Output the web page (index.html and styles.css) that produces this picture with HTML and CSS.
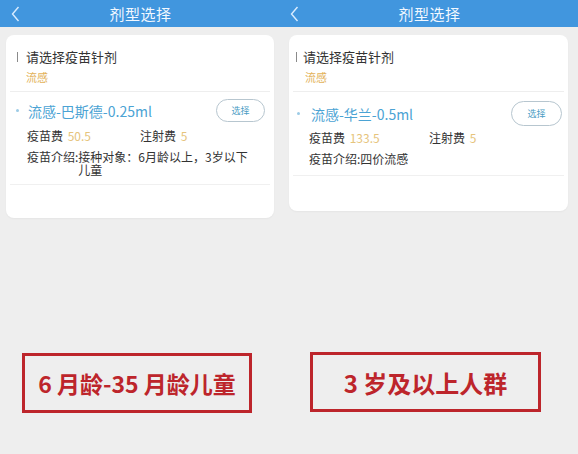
FILE: index.html
```html
<!DOCTYPE html>
<html lang="zh-CN">
<head>
    <meta charset="UTF-8">
    <meta name="viewport" content="width=device-width, initial-scale=1.0">
    <title>剂型选择</title>
    <link rel="stylesheet" href="styles.css">
</head>
<body>
    <div class="screens">
        <!-- 左侧：6月龄-35月龄 -->
        <div class="phone phone-left">
            <div class="nav">
                <span class="nav-back">
                    <svg width="9" height="16" viewBox="0 0 9 16"><path d="M7.5 1 L1.5 8 L7.5 15" fill="none" stroke="#d9ecff" stroke-width="1.4"/></svg>
                </span>
                <span class="nav-title">剂型选择</span>
                <span></span>
            </div>

            <div class="card">
                <div class="card-head">
                    <div class="card-title">请选择疫苗针剂</div>
                    <div class="card-sub">流感</div>
                </div>
                <div class="dose">
                    <div class="dose-top">
                        <span class="dose-name">流感-巴斯德-0.25ml</span>
                        <button class="pick-btn">选择</button>
                    </div>
                    <div class="fee-row">
                        <span class="fee">疫苗费 <em>50.5</em></span>
                        <span class="fee">注射费 <em>5</em></span>
                    </div>
                    <div class="intro">
                        <span class="intro-label">疫苗介绍:</span>
                        <span class="intro-text">接种对象：6月龄以上，3岁以下儿童</span>
                    </div>
                </div>
            </div>

            <div class="tag">6 月龄-35 月龄儿童</div>
        </div>

        <!-- 右侧：3岁及以上 -->
        <div class="phone phone-right">
            <div class="nav">
                <span class="nav-back">
                    <svg width="9" height="16" viewBox="0 0 9 16"><path d="M7.5 1 L1.5 8 L7.5 15" fill="none" stroke="#d9ecff" stroke-width="1.4"/></svg>
                </span>
                <span class="nav-title">剂型选择</span>
                <span></span>
            </div>

            <div class="card">
                <div class="card-head">
                    <div class="card-title">请选择疫苗针剂</div>
                    <div class="card-sub">流感</div>
                </div>
                <div class="dose">
                    <div class="dose-top">
                        <span class="dose-name">流感-华兰-0.5ml</span>
                        <button class="pick-btn">选择</button>
                    </div>
                    <div class="fee-row">
                        <span class="fee">疫苗费 <em>133.5</em></span>
                        <span class="fee">注射费 <em>5</em></span>
                    </div>
                    <div class="intro">
                        <span class="intro-label">疫苗介绍:</span>
                        <span class="intro-text">四价流感</span>
                    </div>
                </div>
            </div>

            <div class="tag">3 岁及以上人群</div>
        </div>
    </div>
</body>
</html>
```

FILE: styles.css
```css
:root {
    --nav: #4196de;
    --bg: #eeeeee;
    --card-bg: #ffffff;
    --text: #333333;
    --blue: #4ba3d4;
    --orange: #e3b25a;
    --red: #bd252b;
}

body {
    margin: 0;
    background: var(--bg);
    font-family: "Noto Sans CJK SC", "Noto Sans", sans-serif;
    color: var(--text);
}

.screens {
    display: flex;
    width: 578px;
    height: 454px;
    overflow: hidden;
}

.phone {
    background: var(--bg);
}

.phone-left {
    width: 281px;
}

.phone-right {
    width: 297px;
}

.nav {
    height: 27px;
    background: var(--nav);
    display: grid;
    grid-template-columns: 1fr auto 1fr;
    align-items: center;
}

.nav-back {
    display: flex;
    align-items: center;
    padding-left: 11px;
}

.phone-right .nav-back {
    padding-left: 9px;
}

.nav-title {
    color: #f2f8ff;
    font-size: 15px;
    line-height: 27px;
    letter-spacing: 0.5px;
}

.card {
    background: var(--card-bg);
    border-radius: 8px;
    margin: 8px 7px 0 6px;
    padding: 13px 0 33px;
    box-shadow: 0 1px 2px rgba(0, 0, 0, 0.04);
}

.phone-right .card {
    margin: 8px 10px 0 8px;
    padding-bottom: 35px;
}

.card-head {
    padding: 0 0 6px 7px;
    margin: 0 4px;
    border-bottom: 1px solid #eeeeee;
}

.card-title {
    font-size: 13px;
    line-height: 18px;
    display: flex;
    align-items: center;
}

.card-title::before {
    content: "";
    width: 1px;
    height: 10px;
    background: #8a8a8a;
    margin: 0 8px 0 0;
}

.phone-right .card-title::before {
    margin-right: 6px;
}

.card-sub {
    margin-top: 3px;
    padding-left: 9px;
    font-size: 11px;
    line-height: 16px;
    color: var(--orange);
}

.phone-right .card-head {
    padding-left: 3px;
}

.dose {
    margin: 0 4px;
    padding: 7px 5px 8px 6px;
    border-bottom: 1px solid #f0f0f0;
}

.phone-right .dose {
    padding: 9px 2px 9px 4px;
}

.dose-top {
    display: flex;
    justify-content: space-between;
    align-items: center;
}

.dose-name {
    display: flex;
    align-items: center;
    font-size: 14px;
    color: var(--blue);
}

.dose-name::before {
    content: "";
    width: 3px;
    height: 3px;
    border-radius: 50%;
    background: #9ccbe6;
    margin-right: 9px;
}

.phone-right .dose-name::before {
    margin-right: 11px;
}

.pick-btn {
    width: 49px;
    height: 23px;
    border: 1px solid #b7c6cf;
    border-radius: 12px;
    background: #ffffff;
    color: #4b9cc4;
    font-family: inherit;
    font-size: 9px;
    padding: 0;
}

.phone-right .pick-btn {
    width: 51px;
    height: 25px;
    border-radius: 13px;
}

.fee-row {
    display: flex;
    margin-top: 6px;
    padding-left: 11px;
    font-size: 12px;
    line-height: 16px;
}

.phone-right .fee-row {
    margin-top: 4px;
    padding-left: 12px;
}

.fee {
    width: 113px;
}

.phone-right .fee {
    width: 120px;
}

.fee em {
    font-style: normal;
    color: #e6c47c;
    margin-left: 2px;
}

.intro {
    display: flex;
    margin-top: 6px;
    padding-left: 11px;
    font-size: 12px;
    line-height: 13px;
}

.phone-right .intro {
    padding-left: 12px;
    line-height: 14px;
}

.intro-text {
    width: 170px;
}

.tag {
    box-sizing: border-box;
    width: 230px;
    height: 60px;
    margin: 135px 0 0 22px;
    border: 3px solid var(--red);
    display: flex;
    align-items: center;
    justify-content: center;
    color: var(--red);
    font-size: 23px;
    font-weight: 700;
}

.phone-right .tag {
    width: 231px;
    margin: 141px 0 0 29px;
    font-size: 24px;
}
```
